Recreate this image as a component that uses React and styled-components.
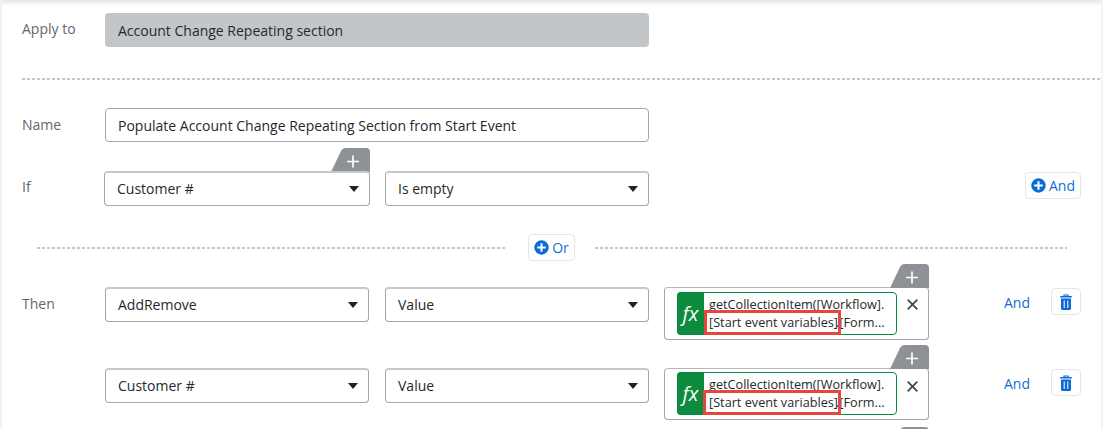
import React from "react";
import styled, { createGlobalStyle, css } from "styled-components";

const Global = createGlobalStyle`
  html, body { margin: 0; padding: 0; background: #fff; }
  body { font-family: "Open Sans", "Liberation Sans", sans-serif; overflow: hidden; }
`;

const Page = styled.div`
  width: 1103px;
  height: 429px;
  box-sizing: border-box;
  overflow: hidden;
  position: relative;
  background: #fff;
  border-left: 2px solid #f1f1f1;
  border-right: 2px solid #f4f4f4;
`;

const TopShade = styled.div`
  position: absolute;
  left: 0;
  right: 0;
  top: 0;
  height: 6px;
  background: linear-gradient(#e4e6e7, #ffffff);
`;

const Row = styled.div`
  display: flex;
  align-items: flex-start;
  height: ${(p) => p.$h}px;
  margin-top: ${(p) => p.$mt || 0}px;
  padding-left: 20px;
`;

const Label = styled.div`
  width: ${(p) => p.$w || 83}px;
  flex: none;
  font-size: 14px;
  line-height: 20px;
  color: #62686e;
  padding-top: ${(p) => p.$pt || 5}px;
`;

const Field = styled.div`
  box-sizing: border-box;
  width: 544px;
  height: 34px;
  border-radius: 4px;
  font-size: 14px;
  display: flex;
  align-items: center;
  color: #26292c;
  ${(p) =>
    p.$disabled
      ? css`background: #c3c6c9; padding-left: 13px;`
      : css`background: #fff; border: 1px solid #a3a7ab; padding-left: 12px;`}
`;

const dashes = css`
  height: 2px;
  background: repeating-linear-gradient(90deg, #c4c6c8 0 3px, #fff 3px 5px);
`;

const Divider = styled.div`
  ${dashes}
  margin: 31px 0 0 20px;
`;

const Slot = styled.div`
  position: relative;
  flex: none;
  width: ${(p) => p.$w}px;
  margin-left: ${(p) => p.$ml || 0}px;
`;

const Tab = styled.svg`
  position: absolute;
  right: 0;
  top: -23px;
  display: block;
`;

const TabAdd = () => (
  <Tab width="39" height="24" viewBox="0 0 39 24">
    <path d="M0 24 L10 3 Q11.5 0 15 0 L35 0 Q39 0 39 4 L39 24 Z" fill="#8e9196" />
    <path d="M22 7.5v12M16 13.5h12" stroke="#fff" strokeWidth="1.7" fill="none" />
  </Tab>
);

const SelectBox = styled.div`
  box-sizing: border-box;
  position: relative;
  width: 100%;
  height: 35px;
  background: #fff;
  border: 1px solid #a3a7ab;
  border-top: 2px solid #c6c8ca;
  border-radius: 4px;
  font-size: 14px;
  color: #26292c;
  padding: 0 0 1px 12px;
  display: flex;
  align-items: center;
`;

const Caret = styled.span`
  margin-left: auto;
  margin-right: 10px;
  width: 0;
  height: 0;
  border-left: 5px solid transparent;
  border-right: 5px solid transparent;
  border-top: 6px solid #222;
`;

const Select = ({ w, ml, text, tab }) => (
  <Slot $w={w} $ml={ml}>
    {tab && <TabAdd />}
    <SelectBox>
      {text}
      <Caret />
    </SelectBox>
  </Slot>
);

const Spacer = styled.div`
  flex: 1;
`;

const OutlineButton = styled.div`
  box-sizing: border-box;
  height: 27px;
  border: 1px solid #e4e6e8;
  border-radius: 4px;
  display: flex;
  align-items: center;
  justify-content: center;
  gap: 3px;
  font-size: 14px;
  color: #0f6fd6;
  flex: none;
  background: #fff;
  width: ${(p) => p.$w}px;
  margin-right: ${(p) => p.$mr || 0}px;
  margin-left: ${(p) => p.$ml || 0}px;
  margin-top: ${(p) => p.$mt || 0}px;
`;

const PlusCircle = () => (
  <svg width="15" height="15" viewBox="0 0 15 15">
    <circle cx="7.5" cy="7.5" r="7.2" fill="#0a6cd6" />
    <path d="M7.5 3.2v8.6M3.2 7.5h8.6" stroke="#fff" strokeWidth="2" />
  </svg>
);

const Trash = () => (
  <svg width="12" height="16" viewBox="0 0 12 16">
    <path d="M3.4 2V.5h5.2V2h3.2v1.6H.2V2zM4.6 1.6V2h2.8v-.4z" fill="#0a6cd6" fillRule="evenodd" />
    <path d="M1 4.6h10v10a1.3 1.3 0 0 1-1.3 1.3H2.3A1.3 1.3 0 0 1 1 14.6z" fill="#0a6cd6" />
    <path d="M4.2 6.5v7.5M7.8 6.5v7.5" stroke="#fff" strokeWidth="1" />
  </svg>
);

const OrRow = styled.div`
  display: flex;
  align-items: center;
  height: 27px;
  margin-top: 28px;
  padding-left: 35px;
`;

const OrLine = styled.div`
  ${dashes}
  flex: none;
  width: ${(p) => p.$w}px;
  margin-left: ${(p) => p.$ml || 0}px;
`;

const FxBox = styled.div`
  box-sizing: border-box;
  height: ${(p) => p.$h}px;
  width: 100%;
  background: #fff;
  border: 1px solid #a3a7ab;
  border-top: 1px solid #b4b7ba;
  border-radius: 4px;
  padding: ${(p) => p.$pt}px 0 0 12px;
  display: flex;
  align-items: flex-start;
`;

const FxPill = styled.div`
  box-sizing: border-box;
  width: 220px;
  height: 43px;
  border: 1px solid #0c8a3e;
  border-radius: 4px;
  display: flex;
  flex: none;
`;

const FxBadge = styled.div`
  width: 27px;
  margin: -1px 0 -1px -1px;
  border-radius: 4px 0 0 4px;
  flex: none;
  background: #0c8a3e;
  color: #fff;
  font-style: italic;
  font-size: 20px;
  display: flex;
  align-items: center;
  justify-content: center;
`;

const FxText = styled.div`
  font-size: 12.7px;
  line-height: 18px;
  color: #26292c;
  padding: 2px 0 0 5px;
  white-space: nowrap;
`;

const Mark = styled.span`
  outline: 3px solid #e8453c;
  padding: 0 0 1px ${(p) => p.$left}px;
  margin: 0 -2px 0 -${(p) => p.$left}px;
`;

const Close = styled.svg`
  margin: ${(p) => p.$mt}px 0 0 10px;
  flex: none;
`;

const Expression = ({ pt, h, closeTop, markLeft }) => (
  <Slot $w={265} $ml={15}>
    <TabAdd />
    <FxBox $pt={pt} $h={h}>
      <FxPill>
        <FxBadge>fx</FxBadge>
        <FxText>
          getCollectionItem([Workflow].
          <br />
          <Mark $left={markLeft}>[Start event variables]</Mark>.[Form...
        </FxText>
      </FxPill>
      <Close $mt={closeTop} width="11" height="11" viewBox="0 0 11 11">
        <path d="M.7.7l9.6 9.6M10.3.7L.7 10.3" stroke="#444" strokeWidth="1.7" />
      </Close>
    </FxBox>
  </Slot>
);

const AndLink = styled.div`
  flex: none;
  width: 26px;
  margin-left: 75px;
  font-size: 14px;
  line-height: 20px;
  padding-top: 6px;
  color: #0f6fd6;
`;

const ActionRow = ({ label, field, h, mt, pt, closeTop, markLeft }) => (
  <Row $h={h} $mt={mt}>
    <Label $pt={7}>{label}</Label>
    <Select w={264} text={field} />
    <Select w={264} ml={16} text="Value" />
    <Expression pt={pt} h={h} closeTop={closeTop} markLeft={markLeft} />
    <AndLink>And</AndLink>
    <OutlineButton $w={30} $ml={21} $mt={1}>
      <Trash />
    </OutlineButton>
  </Row>
);

const App = () => (
  <Page>
    <Global />
    <TopShade />
    <Row $h={34} $mt={13}>
      <Label $pt={6}>Apply to</Label>
      <Field $disabled>Account Change Repeating section</Field>
    </Row>
    <Divider />
    <Row $h={34} $mt={28}>
      <Label $pt={7}>Name</Label>
      <Field>Populate Account Change Repeating Section from Start Event</Field>
    </Row>
    <Row $h={35} $mt={29}>
      <Label $pt={6} $w={82}>If</Label>
      <Select w={266} text="Customer #" tab />
      <Select w={264} ml={15} text="Is empty" />
      <Spacer />
      <OutlineButton $w={56} $mr={20} $mt={1}>
        <PlusCircle />
        And
      </OutlineButton>
    </Row>
    <OrRow>
      <OrLine $w={470} />
      <OutlineButton $w={47} $ml={21}>
        <PlusCircle />
        Or
      </OutlineButton>
      <OrLine $w={472} $ml={20} />
    </OrRow>
    <ActionRow label="Then" field="AddRemove" h={53} mt={26} pt={4} closeTop={7} markLeft={2} />
    <ActionRow field="Customer #" h={52} mt={28} pt={3} closeTop={9} markLeft={3} />
    <Row $h={1} $mt={30}>
      <Label />
      <Slot $w={264} />
      <Slot $w={264} $ml={16} />
      <Slot $w={265} $ml={15}>
        <TabAdd />
      </Slot>
    </Row>
  </Page>
);

export default App;
